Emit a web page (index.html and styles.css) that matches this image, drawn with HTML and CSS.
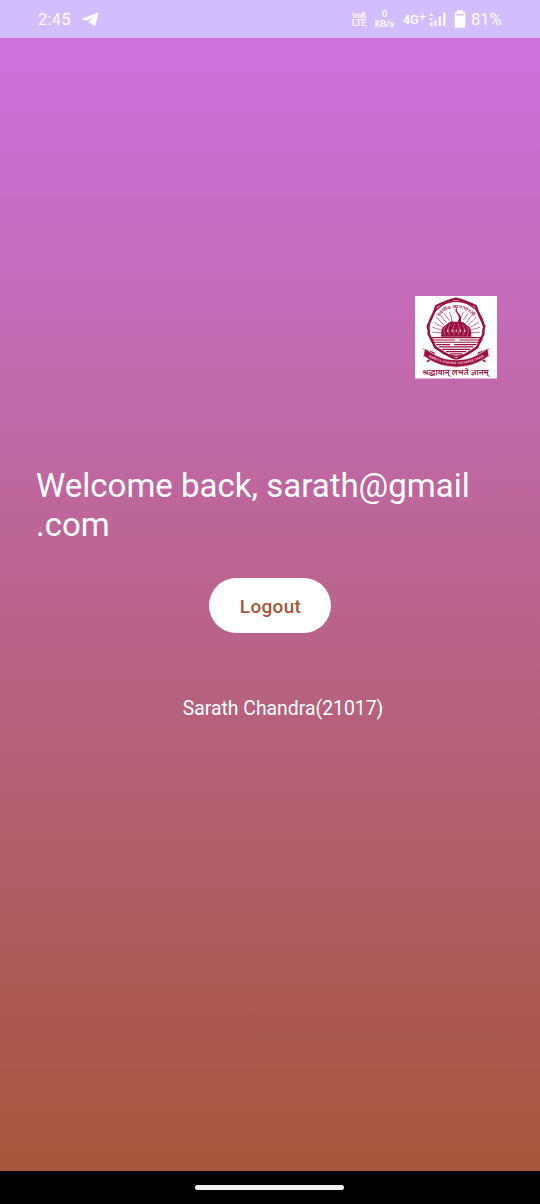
FILE: index.html
```html
<!DOCTYPE html>
<html lang="en">
<head>
<meta charset="utf-8">
<title>Welcome</title>
<link rel="stylesheet" href="styles.css">
</head>
<body>
<div class="phone">
  <header class="status">
    <span class="time">2:45</span>
    <svg class="plane" viewBox="0 0 17 15"><path d="M16 .6 1 6.300Q-.6 7.200 1 7.700L4.900 8.800 12.300 4.200 6.300 9.800 11.600 13.600Q13.200 14.600 13.700 12.800L16.300 1.400Q16.500 .3 16 .6Z" fill="#fff"/></svg>
    <span class="volte"><span>Voß</span><span>LTE</span></span>
    <span class="speed"><span>0</span><span>KB/s</span></span>
    <span class="net">4G</span><span class="plus">+</span>
    <svg class="signal" viewBox="0 0 17 16"><g fill="#fff"><path d="M2.200 2 4 5H.4ZM2.200 10 4 7H.4Z"/><rect x="1.200" y="11.500" width="2.200" height="3.500"/><rect x="5.200" y="9.500" width="2.200" height="5.500" rx=".6"/><rect x="9.700" y="5.500" width="2.200" height="9.500" rx=".6"/><rect x="14.200" y="1.500" width="2.300" height="13.500" rx=".6"/></g></svg>
    <svg class="battery" viewBox="0 0 12 18"><path d="M4 0H8Q9 0 9 1V2H10Q11.300 2 11.300 3.300V16.300Q11.300 17.700 10 17.700H2Q.7 17.700 .7 16.300V3.300Q.7 2 2 2H3V1Q3 0 4 0Z" fill="#fff"/><path d="M2.200 3.700H9.800V5.500H2.200Z" fill="#d2beff"/></svg>
    <span class="percent">81%</span>
  </header>
  <main class="screen">
    <svg class="emblem" viewBox="0 0 82 82">
      <defs>
        <path id="arch" d="M20.500 27A21.500 21.500 0 0 1 61.500 27"/>
        <path id="band" d="M10 58Q20 65 30 66.700Q41 69 52 66.700Q62 65 72 58"/>
      </defs>
      <rect width="82" height="82" fill="#fff"/>
      <path d="M40.700 2.500Q50 4.500 60.500 10Q63 18 69 30Q67.500 33 68 38Q64 44 62 51Q52 58 41 63Q30 58 20 51Q17.500 44 13.500 38Q14 33 12.500 30Q18.500 18 21 10Q31.500 4.500 40.700 2.500Z" fill="#fff" stroke="#9b1242" stroke-width="2.300" stroke-linejoin="round"/>
      <circle cx="41" cy="32.500" r="27.300" fill="none" stroke="#9b1242" stroke-width="1.500"/>
      <text class="arch-text"><textPath href="#arch" startOffset="50%" text-anchor="middle" textLength="39" lengthAdjust="spacingAndGlyphs">स्वर्गीय ज्ञानभारती</textPath></text>
      <g stroke="#ae3e65" stroke-width=".7">
        <path d="M17 36 27 36.500M17 31 27 34M18.500 26 28 31.500M21 21 29 29M24.500 18 31 26.500M29 17 34 24M34 16 36.500 22M65 36 55 36.500M65 31 55 34M63.500 26 54 31.500M61 21 53 29M57.500 18 51 26.500M53 17 48 24M48 16 45.500 22"/>
      </g>
      <path d="M41 10.500 42 15.500Q48 21 45 27H37Q34 21 40 15.500Z" fill="#9b1242"/>
      <path d="M40 15Q45.500 21 42.500 26H37.500Q34.500 20 40 15Z" fill="#fff"/>
      <path d="M26 40.500Q25 31 31 28.500Q35 24.500 38 25.500H44Q47 24.500 51 28.500Q57 31 56 40.500Z" fill="#9b1242"/>
      <g fill="none" stroke="#d792a9" stroke-width=".55"><path d="M31 29.500Q27 34 30 39M35 28Q31 33 34.500 39M39 27.500Q37 33 39 39M43 27.500Q45 33 43 39M47 28Q51 33 47.500 39M51 29.500Q55 34 52 39"/></g>
      <g fill="#e9c3cf"><ellipse cx="32.500" cy="34.500" rx=".7" ry="1.500"/><ellipse cx="37" cy="34.500" rx=".7" ry="1.500"/><ellipse cx="41" cy="34.500" rx=".7" ry="1.500"/><ellipse cx="45" cy="34.500" rx=".7" ry="1.500"/><ellipse cx="49.500" cy="34.500" rx=".7" ry="1.500"/></g>
      <path d="M16 41.300H66M17 43.700H40M44 43.700H65M19 46H63M21 48.300H35M39 48.300H61M24 50.600H58M27 53H55M31 55.300H51M35 57.600H47" stroke="#9b1242" stroke-width="1.150"/>
      <path d="M7.500 52 19 56 22 62 11 66 13.500 62 8 60 11 56ZM74.500 52 63 56 60 62 71 66 68.500 62 74 60 71 56Z" fill="#9b1242"/>
      <path d="M9.500 52Q22 61 31 62.500Q41 64.500 51 62.500Q60 61 72.500 52L73.500 59.500Q62 68 52 69.500Q41 72 30 69.500Q20 68 8.500 59.500Z" fill="#9b1242" stroke="#fff" stroke-width=".7"/>
      <text class="band-text"><textPath href="#band" startOffset="50%" text-anchor="middle" textLength="58">AMRITA VISHWA VIDYAPEETHAM</textPath></text>
      <text class="motto" x="7.300" y="79" textLength="66" lengthAdjust="spacingAndGlyphs">श्रद्धावान् लभते ज्ञानम्</text>
    </svg>
    <h1 class="welcome">Welcome back, sarath@gmail<br>.com</h1>
    <button class="logout">Logout</button>
    <p class="student">Sarath Chandra(21017)</p>
  </main>
  <footer class="navbar"><span class="handle"></span></footer>
</div>
</body>
</html>
```
FILE: styles.css
```css
* { box-sizing: border-box; }
body { margin: 0; font-family: Roboto, "Noto Sans", sans-serif; color: #fff; }
.phone { width: 540px; height: 1204px; display: flex; flex-direction: column; overflow: hidden; }
.status { height: 38px; flex: none; display: flex; align-items: center; padding-left: 38px; background: #d2beff; font-weight: 450; white-space: nowrap; }
.time { width: 44px; font-size: 16.500px; line-height: 20px; padding-top: 2px; letter-spacing: .2px; }
.plane { width: 17px; height: 15px; }
.volte { width: 15px; margin-left: 253px; display: flex; flex-direction: column; font-size: 8.800px; line-height: 10px; font-weight: 600; }
.volte span:first-child { font-size: 7.800px; line-height: 9px; margin-bottom: -2px; }
.speed { width: 21px; margin-left: 7px; display: flex; flex-direction: column; align-items: center; font-size: 9px; line-height: 10px; font-weight: 600; }
.net { width: 16px; margin-left: 8px; font-size: 12.500px; line-height: 16px; padding-top: 1px; font-weight: 500; }
.plus { width: 7px; font-size: 12px; line-height: 14px; padding-bottom: 4px; }
.signal { width: 17px; height: 16px; margin-left: 3px; }
.battery { width: 12px; height: 18px; margin-left: 8px; }
.percent { margin-left: 5px; font-size: 16.500px; line-height: 20px; padding-top: 2px; }
.screen { height: 1133px; flex: none; display: flex; flex-direction: column; align-items: center; background: linear-gradient(#ce71df, #a6563a); }
.emblem { width: 82.500px; height: 82.500px; flex: none; margin-top: 258.300px; margin-right: 43px; align-self: flex-end; }
.arch-text { font: 700 4.500px "Noto Sans", "Noto Sans Devanagari", sans-serif; fill: #ae3e65; }
.band-text { font: 700 3.500px Roboto, sans-serif; fill: #e8bdca; }
.motto { font: 600 7.800px "Noto Sans", "Noto Sans Devanagari", sans-serif; fill: #9b1242; }
.welcome { align-self: flex-start; margin: 87px 0 0 36px; font-size: 33px; line-height: 39px; font-weight: 400; white-space: nowrap; }
.logout { width: 122px; height: 55px; flex: none; margin-top: 34.200px; border: 0; border-radius: 28px; background: #fff; color: #a5563a; font: 500 19px Roboto, sans-serif; letter-spacing: .3px; padding: 2px 0 0 1px; }
.student { margin: 64px 0 0 26px; font-size: 19.400px; line-height: 24px; white-space: nowrap; }
.navbar { height: 33px; flex: none; display: flex; justify-content: center; padding: 14px 1px 0 0; background: #000; }
.handle { width: 149px; height: 5px; border-radius: 3px; background: #f1f1f1; }
```
